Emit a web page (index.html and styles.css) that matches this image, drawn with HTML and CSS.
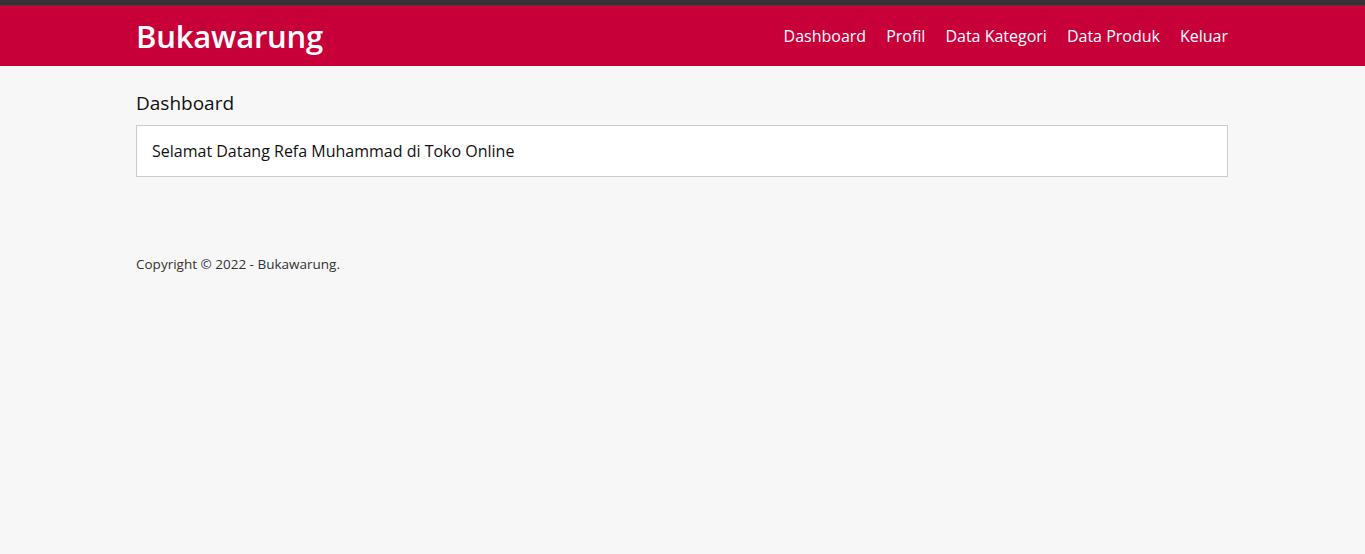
FILE: index.html
```html
<!DOCTYPE html>
<html lang="id">
<head>
<meta charset="utf-8">
<title>Bukawarung</title>
<link rel="stylesheet" href="styles.css">
</head>
<body>
<div class="topbar"></div>
<header class="header">
  <div class="container header-inner">
    <h1 class="logo">Bukawarung</h1>
    <nav class="nav">
      <a href="#">Dashboard</a>
      <a href="#">Profil</a>
      <a href="#">Data Kategori</a>
      <a href="#">Data Produk</a>
      <a href="#">Keluar</a>
    </nav>
  </div>
</header>
<main class="section">
  <div class="container">
    <h3 class="title">Dashboard</h3>
    <div class="box">
      <h4 class="welcome">Selamat Datang Refa Muhammad di Toko Online</h4>
    </div>
  </div>
</main>
<footer class="footer">
  <div class="container">
    <small>Copyright &copy; 2022 - Bukawarung.</small>
  </div>
</footer>
</body>
</html>
```

FILE: styles.css
```css
* { box-sizing: border-box; }
body {
  margin: 0;
  font-family: "Open Sans", "Noto Sans", sans-serif;
  background: #f7f7f8;
  color: #111;
}
.topbar {
  height: 6px;
  background: #333333;
  border-bottom: 1px solid #7a2a3a;
}
.container {
  width: 1092px;
  margin-left: 136px;
}
.header {
  background: #c8003a;
  color: #fff;
}
.header-inner {
  display: flex;
  justify-content: space-between;
  align-items: center;
  height: 60px;
}
.logo {
  margin: 0;
  font-size: 31px;
  font-weight: 600;
  letter-spacing: -0.2px;
}
.nav {
  display: flex;
  gap: 20px;
}
.nav a {
  color: #fff;
  text-decoration: none;
  font-size: 16px;
}
.section {
  padding: 24px 0 25px;
}
.title {
  margin: 0 0 9px;
  font-size: 19px;
  font-weight: 400;
}
.box {
  background: #fff;
  border: 1px solid #ccc;
  padding: 15px;
}
.welcome {
  margin: 0;
  font-size: 16px;
  font-weight: 400;
  line-height: 20px;
}
.footer {
  padding: 50px 0;
  color: #333;
}
.footer small {
  font-size: 13.5px;
}
```
